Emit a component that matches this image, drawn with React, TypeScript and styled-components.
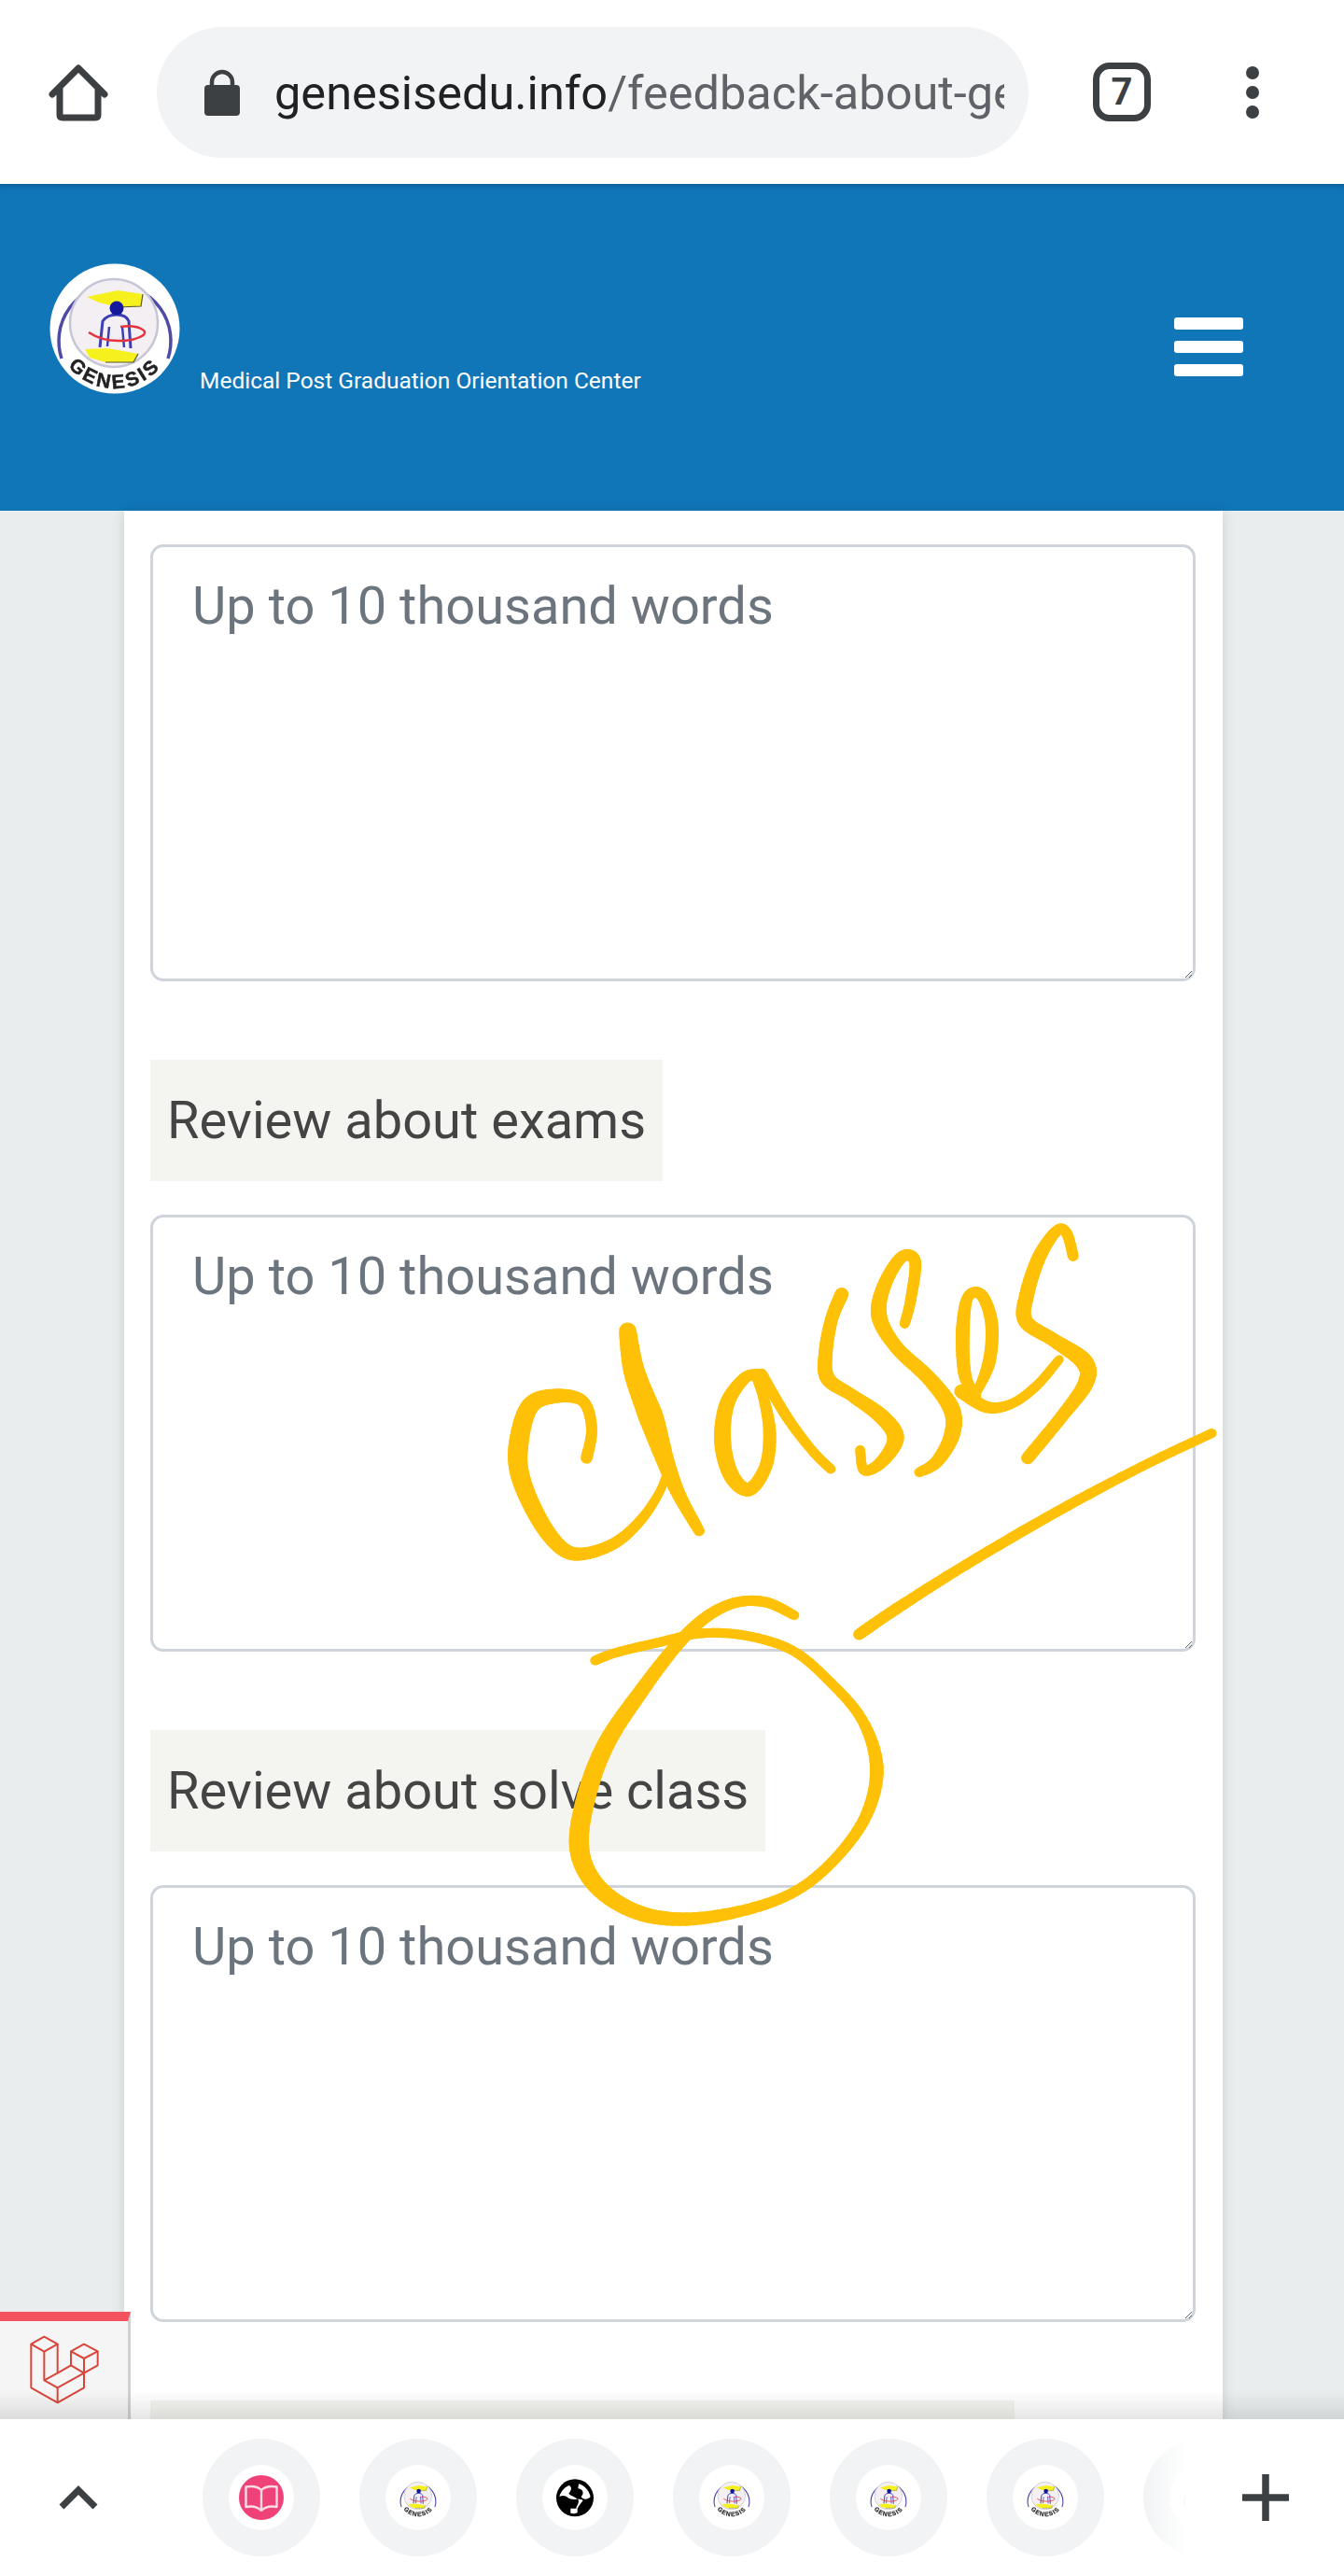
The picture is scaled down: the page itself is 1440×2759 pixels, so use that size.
import { FunctionComponent } from 'react';
import styled, { createGlobalStyle } from 'styled-components';

const GlobalStyle = createGlobalStyle`
  html, body {
    margin: 0;
    padding: 0;
    background: #e9eded;
  }
  * {
    box-sizing: border-box;
  }
`;

const Screen = styled.div`
  position: relative;
  width: 1440px;
  height: 2759px;
  overflow: hidden;
  font-family: Roboto, 'Liberation Sans', sans-serif;
`;

/* browser chrome */
const ChromeBar = styled.div`
  display: flex;
  align-items: center;
  height: 197px;
  padding-left: 168px;
  background: #fff;
  position: relative;
`;

const HomeIcon = styled.svg`
  position: absolute;
  left: 44px;
  top: 60px;
  width: 80px;
  height: 80px;
`;

const AddressPill = styled.div`
  display: flex;
  align-items: center;
  width: 934px;
  height: 140px;
  padding-left: 50px;
  border-radius: 70px;
  background: #f1f3f4;
`;

const LockIcon = styled.svg`
  flex: none;
  width: 40px;
  height: 50px;
  margin-right: 36px;
`;

const UrlText = styled.div`
  width: 782px;
  overflow: hidden;
  white-space: nowrap;
  font-size: 50.5px;
  line-height: 70px;
  color: #5f6368;
  padding-top: 2px;
`;

const UrlHost = styled.span`
  color: #202124;
`;

const TabCount = styled.div`
  display: flex;
  align-items: center;
  justify-content: center;
  width: 62px;
  height: 63px;
  margin-left: 69px;
  border: 7px solid #3c4043;
  border-radius: 18px;
  font-size: 40px;
  font-weight: 700;
  color: #3c4043;
`;

const MenuDots = styled.div`
  display: flex;
  flex-direction: column;
  gap: 7px;
  margin-left: 102px;
`;

const MenuDot = styled.span`
  width: 14px;
  height: 14px;
  border-radius: 50%;
  background: #3c4043;
`;

/* site header */
const SiteHeader = styled.header`
  display: flex;
  justify-content: space-between;
  height: 350px;
  padding: 85px 108px 0 53px;
  background: #1076b8;
  box-shadow: inset 0 7px 6px -5px rgba(0, 0, 0, 0.22);
`;

const Brand = styled.div`
  display: flex;
  align-items: flex-end;
  height: 140px;
`;

const LogoSvg = styled.svg<{ $size: number; $soft?: boolean }>`
  flex: none;
  display: block;
  width: ${(p) => p.$size}px;
  height: ${(p) => p.$size}px;
  ${(p) => (p.$soft ? 'filter: blur(0.7px);' : '')}
`;

const Tagline = styled.div`
  margin: 0 0 0 21px;
  font-size: 24.500px;
  line-height: 28px;
  color: #fff;
`;

const Hamburger = styled.div`
  display: flex;
  flex-direction: column;
  gap: 12px;
  width: 74px;
  margin-top: 58px;
`;

const HamburgerBar = styled.span`
  height: 13px;
  border-radius: 3px;
  background: #fff;
`;

/* page */
const Card = styled.main`
  width: 1177px;
  height: 2100px;
  margin-left: 133px;
  padding: 36px 29px 0 28px;
  background: #fff;
  box-shadow: 0 0 14px rgba(0, 0, 0, 0.12);
`;

const Field = styled.textarea`
  display: block;
  width: 100%;
  height: 468px;
  padding: 21px 42px;
  border: 3.5px solid #ced4da;
  border-radius: 14px;
  background: #fff;
  font-family: inherit;
  font-size: 56px;
  line-height: 84px;
  outline: none;

  &::placeholder {
    color: #6c757d;
    opacity: 1;
  }
`;

const FieldLabel = styled.div`
  width: fit-content;
  height: 130px;
  margin: 84px 0 36px;
  padding: 23px 18px;
  background: #f4f5f0;
  font-size: 56px;
  line-height: 84px;
  color: #444;
`;

const CutOffLabel = styled(FieldLabel)`
  width: 926px;
`;

const Scribble = styled.svg`
  position: absolute;
  left: 500px;
  top: 1280px;
  width: 840px;
  height: 800px;
  pointer-events: none;
`;

/* laravel debugbar tab */
const DebugTab = styled.div`
  position: absolute;
  left: 0;
  top: 2476px;
  width: 140px;
  height: 115px;
  border-top: 10px solid #f4525f;
  border-right: 3px solid #d0d0d0;
  background: #f5f5f5;
`;

const DebugLogo = styled.svg`
  display: block;
  width: 150px;
  height: 125px;
  margin-top: -16px;
`;

/* bottom tab strip */
const BottomBar = styled.div`
  position: absolute;
  left: 0;
  right: 0;
  bottom: 0;
  display: flex;
  align-items: center;
  height: 168px;
  background: #fff;

  &::before {
    content: '';
    position: absolute;
    left: 0;
    right: 0;
    top: -30px;
    height: 30px;
    background: linear-gradient(to bottom, rgba(0, 0, 0, 0), rgba(0, 0, 0, 0.1));
  }
`;

const ChevronCell = styled.div`
  flex: none;
  width: 217px;
  padding-left: 60px;
`;

const ChevronIcon = styled.svg`
  display: block;
  width: 48px;
  height: 30px;
`;

const TabStrip = styled.div`
  flex: none;
  display: flex;
  gap: 42px;
  width: 1055px;
  overflow: hidden;
  mask-image: linear-gradient(to right, #000 calc(100% - 46px), transparent);
`;

const TabCircle = styled.div`
  flex: none;
  display: flex;
  align-items: center;
  justify-content: center;
  width: 126px;
  height: 126px;
  border-radius: 50%;
  background: #f1f3f4;
`;

const TabInner = styled.div`
  display: flex;
  align-items: center;
  justify-content: center;
  width: 70px;
  height: 70px;
  border-radius: 50%;
  background: #fff;
`;

const FaviconSvg = styled.svg<{ $size: number }>`
  display: block;
  width: ${(p) => p.$size}px;
  height: ${(p) => p.$size}px;
`;

const PlusCell = styled.div`
  flex: 1;
  display: flex;
  justify-content: center;
`;

const PlusIcon = styled.svg`
  display: block;
  width: 50px;
  height: 50px;
`;

const GenesisLogo: FunctionComponent<{ size: number; id: string; soft?: boolean }> = ({ size, id, soft }) => (
  <LogoSvg $size={size} $soft={soft} viewBox="0 0 140 140">
    <circle cx="70" cy="70" r="69.500" fill="#fff" />
    <path d="M13 102 A60 60 0 1 1 127 102" fill="none" stroke="#4f4aa6" strokeWidth="3.500" />
    <circle cx="69" cy="64" r="47" fill="#f3eff3" stroke="#c6c6d6" strokeWidth="2.500" />
    <path d="M40 36 L73 29 L100 33 L98 46 L73 47 L53 42 Z" fill="#f5f01e" />
    <path d="M100 33 L98 46 L73 47" fill="none" stroke="#55552a" strokeWidth="1.200" />
    <path d="M38 92 L63 91 L95 97 L90 106 L60 106 L43 101 Z" fill="#f5f01e" />
    <path d="M95 97 L90 106 L60 106" fill="none" stroke="#55552a" strokeWidth="1.200" />
    <path d="M54 90 L57 62 Q62 55 72 55 Q82 55 85 62 L87 91" fill="none" stroke="#3d3db8" strokeWidth="3" />
    <path d="M62 89 L64 68 M78 68 L80 90" fill="none" stroke="#3d3db8" strokeWidth="2.500" />
    <path d="M42 74 Q60 86 88 82 Q110 76 98 70 Q90 66 76 68" fill="none" stroke="#e4333f" strokeWidth="2.500" />
    <circle cx="72" cy="48" r="7.500" fill="#14189c" />
    <path id={id} d="M6 70 A64 64 0 0 0 134 70" fill="none" />
    <text
      fontFamily="'Liberation Sans', sans-serif"
      fontSize="21"
      fontWeight="700"
      fill="#222"
      stroke="#222"
      strokeWidth="0.500"
      letterSpacing="3"
    >
      <textPath href={`#${id}`} startOffset="50%" textAnchor="middle">GENESIS</textPath>
    </text>
  </LogoSvg>
);

type BrushPoint = [number, number, number];

// a felt-tip stroke: smooth line through the points, width changes along it
const brushSegments = (pts: BrushPoint[]) => {
  const out: { x1: number; y1: number; x2: number; y2: number; w: number }[] = [];
  for (let i = 0; i < pts.length - 1; i++) {
    const p0 = pts[Math.max(i - 1, 0)];
    const p1 = pts[i];
    const p2 = pts[i + 1];
    const p3 = pts[Math.min(i + 2, pts.length - 1)];
    let prev: [number, number] = [p1[0], p1[1]];
    for (let s = 1; s <= 8; s++) {
      const t = s / 8;
      const at = (k: 0 | 1) =>
        0.5 *
        (2 * p1[k] +
          (p2[k] - p0[k]) * t +
          (2 * p0[k] - 5 * p1[k] + 4 * p2[k] - p3[k]) * t * t +
          (3 * p1[k] - p0[k] - 3 * p2[k] + p3[k]) * t * t * t);
      const next: [number, number] = [at(0), at(1)];
      out.push({ x1: prev[0], y1: prev[1], x2: next[0], y2: next[1], w: p1[2] + (p2[2] - p1[2]) * t + 8 });
      prev = next;
    }
  }
  return out;
};

const strokes: BrushPoint[][] = [
  // c
  [[240, 552, 16], [250, 490, 14], [232, 432, 15], [175, 422, 22], [125, 445, 28], [103, 530, 32], [110, 600, 30], [150, 690, 26], [195, 745, 22], [240, 752, 18], [300, 728, 16], [350, 680, 13], [385, 625, 10], [400, 585, 8]],
  // l
  [[322, 285, 26], [335, 370, 34], [370, 470, 42], [398, 560, 28], [425, 630, 20], [465, 705, 14]],
  // a
  [[585, 375, 12], [555, 385, 16], [520, 440, 22], [512, 520, 26], [530, 590, 24], [565, 618, 20], [598, 570, 18], [606, 500, 18], [595, 430, 14], [578, 380, 10]],
  [[590, 375, 14], [640, 465, 14], [690, 535, 12], [728, 575, 12]],
  // s
  [[750, 208, 20], [730, 260, 18], [718, 330, 20], [722, 385, 22], [770, 420, 18], [830, 465, 24], [858, 510, 26], [830, 560, 18], [795, 578, 12], [787, 535, 12]],
  // s
  [[876, 270, 12], [888, 220, 14], [897, 140, 16], [870, 130, 16], [835, 190, 20], [825, 255, 24], [860, 320, 20], [925, 385, 22], [970, 450, 26], [970, 505, 24], [940, 560, 18], [905, 582, 12]],
  // e
  [[1185, 345, 10], [1140, 400, 12], [1090, 438, 12], [1040, 445, 16], [990, 412, 22]],
  [[1020, 415, 8], [1045, 350, 18], [1050, 270, 18], [1030, 210, 16], [1002, 215, 14], [992, 290, 20], [997, 380, 18], [1020, 420, 10]],
  // s
  [[1213, 128, 14], [1200, 80, 14], [1180, 75, 14], [1145, 130, 20], [1120, 210, 22], [1118, 265, 22], [1175, 305, 20], [1235, 350, 28], [1238, 395, 24], [1190, 465, 18], [1122, 552, 18]],
  // arrow line
  [[785, 922, 16], [860, 868, 16], [1000, 775, 14], [1180, 665, 14], [1350, 570, 12], [1490, 500, 12]],
  // circle round "solve class"
  [[655, 882, 12], [600, 855, 14], [540, 855, 14], [480, 885, 16], [420, 945, 18], [350, 1040, 22], [280, 1150, 27], [240, 1260, 30], [225, 1370, 32], [260, 1450, 28], [340, 1505, 24], [440, 1520, 20], [560, 1500, 16], [660, 1460, 14], [740, 1390, 14], [800, 1300, 16], [820, 1200, 20], [790, 1100, 14], [720, 1015, 12], [650, 955, 12], [560, 925, 12], [470, 920, 12], [380, 940, 12], [300, 960, 12], [257, 977, 12]],
];

const Annotation = () => (
  <Scribble viewBox="0 0 1568 1568" preserveAspectRatio="none">
    {strokes.map((stroke, i) => (
      <g key={i} stroke="#ffc107" strokeLinecap="round">
        {brushSegments(stroke).map((s, j) => (
          <line key={j} x1={s.x1} y1={s.y1} x2={s.x2} y2={s.y2} strokeWidth={s.w} />
        ))}
      </g>
    ))}
  </Scribble>
);

const BookFavicon = () => (
  <FaviconSvg $size={48} viewBox="0 0 48 48">
    <circle cx="24" cy="24" r="24" fill="#ee4278" />
    <path
      d="M24 16 C20 12 13 11.500 7.500 12.500 V34 C13 33 20 34 24 38 C28 34 35 33 40.500 34 V12.500 C35 11.500 28 12 24 16 Z M24 16 V37"
      fill="none"
      stroke="#fbdbe6"
      strokeWidth="2.400"
      strokeLinejoin="round"
    />
  </FaviconSvg>
);

const EarthFavicon = () => (
  <FaviconSvg $size={42} viewBox="20 28 120 126">
    <circle cx="80" cy="92" r="60" fill="#000" />
    <path
      d="M30 88 C36 68 50 56 62 52 C72 60 68 68 60 78 C66 86 92 92 92 102 C92 112 84 118 84 126 L66 126 L66 141 C74 143 82 143 88 140 L88 126 C96 112 104 104 106 100 C96 92 70 102 58 92 C50 84 38 84 30 88 Z"
      fill="#fff"
    />
    <path d="M92 47 C112 52 126 70 130 88 C120 100 106 98 100 88 C112 78 104 62 90 62 Z" fill="#fff" />
  </FaviconSvg>
);

export default function App() {
  return (
    <Screen>
      <GlobalStyle />
      <ChromeBar>
        <HomeIcon viewBox="0 0 80 80">
          <path
            d="M12 41 L40 13 L68 41 M20 34 V63 Q20 66 23 66 H58 Q61 66 61 63 V34"
            fill="none"
            stroke="#3c4043"
            strokeWidth="7"
            strokeLinecap="round"
            strokeLinejoin="round"
          />
        </HomeIcon>
        <AddressPill>
          <LockIcon viewBox="0 0 40 50">
            <path d="M9 20 V14 A11 11 0 0 1 31 14 V20" fill="none" stroke="#3c4043" strokeWidth="4.500" />
            <rect x="1" y="17" width="38" height="33" rx="4" fill="#3c4043" />
          </LockIcon>
          <UrlText>
            <UrlHost>genesisedu.info</UrlHost>/feedback-about-genesis
          </UrlText>
        </AddressPill>
        <TabCount>7</TabCount>
        <MenuDots>
          <MenuDot />
          <MenuDot />
          <MenuDot />
        </MenuDots>
      </ChromeBar>

      <SiteHeader>
        <Brand>
          <GenesisLogo size={140} id="logo-main" soft />
          <Tagline>Medical Post Graduation Orientation Center</Tagline>
        </Brand>
        <Hamburger>
          <HamburgerBar />
          <HamburgerBar />
          <HamburgerBar />
        </Hamburger>
      </SiteHeader>

      <Card>
        <Field placeholder="Up to 10 thousand words" />
        <FieldLabel>Review about exams</FieldLabel>
        <Field placeholder="Up to 10 thousand words" />
        <FieldLabel>Review about solve class</FieldLabel>
        <Field placeholder="Up to 10 thousand words" />
        <CutOffLabel />
      </Card>

      <Annotation />

      <DebugTab>
        <DebugLogo viewBox="0 0 450 375">
          <g fill="none" stroke="#d9453b" strokeWidth="6" strokeLinejoin="round">
            <path d="M100 122 L142 98 L185 122 L142 146 Z" />
            <path d="M100 122 V262 L185 310 L270 262 V215" />
            <path d="M142 146 V238 L185 262 V310" />
            <path d="M185 122 V215 L142 238" />
            <path d="M185 262 L270 215 L228 190 L185 215" />
            <path d="M228 145 L270 122 L314 145 L270 168 Z" />
            <path d="M228 145 V190 M314 145 V190 L270 215 V168" />
          </g>
        </DebugLogo>
      </DebugTab>

      <BottomBar>
        <ChevronCell>
          <ChevronIcon viewBox="0 0 48 30">
            <path d="M6 25 L24 7 L42 25" fill="none" stroke="#3c4043" strokeWidth="7" />
          </ChevronIcon>
        </ChevronCell>
        <TabStrip>
          <TabCircle><TabInner><BookFavicon /></TabInner></TabCircle>
          <TabCircle><TabInner><GenesisLogo size={44} id="logo-tab-1" /></TabInner></TabCircle>
          <TabCircle><TabInner><EarthFavicon /></TabInner></TabCircle>
          <TabCircle><TabInner><GenesisLogo size={44} id="logo-tab-2" /></TabInner></TabCircle>
          <TabCircle><TabInner><GenesisLogo size={44} id="logo-tab-3" /></TabInner></TabCircle>
          <TabCircle><TabInner><GenesisLogo size={44} id="logo-tab-4" /></TabInner></TabCircle>
          <TabCircle><TabInner><GenesisLogo size={44} id="logo-tab-5" /></TabInner></TabCircle>
        </TabStrip>
        <PlusCell>
          <PlusIcon viewBox="0 0 50 50">
            <path d="M25 0 V50 M0 25 H50" fill="none" stroke="#3c4043" strokeWidth="7.500" />
          </PlusIcon>
        </PlusCell>
      </BottomBar>
    </Screen>
  );
}
